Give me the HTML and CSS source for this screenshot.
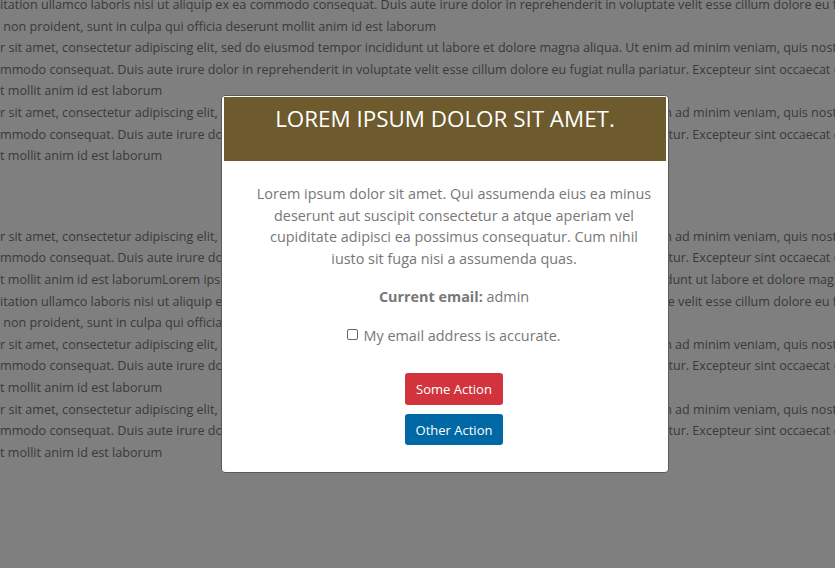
FILE: index.html
```html
<!DOCTYPE html>
<html lang="en">
<head>
<meta charset="utf-8">
<title>Modal</title>
<link rel="stylesheet" href="styles.css">
</head>
<body>
<div class="page">
  <div class="block block-top">
    <div class="line">itation ullamco laboris nisi ut aliquip ex ea commodo consequat. Duis aute irure dolor in reprehenderit in voluptate velit esse cillum dolore eu fugiat nulla pariatur.</div>
    <div class="line">&nbsp;non proident, sunt in culpa qui officia deserunt mollit anim id est laborum</div>
    <div class="line">r sit amet, consectetur adipiscing elit, sed do eiusmod tempor incididunt ut labore et dolore magna aliqua. Ut enim ad minim veniam, quis nostrud exercitation</div>
    <div class="line">mmodo consequat. Duis aute irure dolor in reprehenderit in voluptate velit esse cillum dolore eu fugiat nulla pariatur. Excepteur sint occaecat cupidatat non proident</div>
    <div class="line">t mollit anim id est laborum</div>
    <div class="line">r sit amet, consectetur adipiscing elit, sed do eiusmod tempor incididunt ut labore et dolore magna aliqua. Ut enim ad minim veniam, quis nostrud exercitation</div>
    <div class="line">mmodo consequat. Duis aute irure dolor in reprehenderit in voluptate velit esse cillum dolore eu fugiat nulla pariatur. Excepteur sint occaecat cupidatat non proident</div>
    <div class="line">t mollit anim id est laborum</div>
  </div>
  <div class="block block-bottom">
    <div class="line">r sit amet, consectetur adipiscing elit, sed do eiusmod tempor incididunt ut labore et dolore magna aliqua. Ut enim ad minim veniam, quis nostrud exercitation</div>
    <div class="line">mmodo consequat. Duis aute irure dolor in reprehenderit in voluptate velit esse cillum dolore eu fugiat nulla pariatur. Excepteur sint occaecat cupidatat non proident</div>
    <div class="line">t mollit anim id est laborumLorem ipsum dolor sit amet, consectetur adipiscing elit, sed do eiusmod tempor incididunt ut labore et dolore magna aliqua.</div>
    <div class="line">itation ullamco laboris nisi ut aliquip ex ea commodo consequat. Duis aute irure dolor in reprehenderit in voluptate velit esse cillum dolore eu fugiat nulla pariatur.</div>
    <div class="line">&nbsp;non proident, sunt in culpa qui officia deserunt mollit anim id est laborum</div>
    <div class="line">r sit amet, consectetur adipiscing elit, sed do eiusmod tempor incididunt ut labore et dolore magna aliqua. Ut enim ad minim veniam, quis nostrud exercitation</div>
    <div class="line">mmodo consequat. Duis aute irure dolor in reprehenderit in voluptate velit esse cillum dolore eu fugiat nulla pariatur. Excepteur sint occaecat cupidatat non proident</div>
    <div class="line">t mollit anim id est laborum</div>
    <div class="line">r sit amet, consectetur adipiscing elit, sed do eiusmod tempor incididunt ut labore et dolore magna aliqua. Ut enim ad minim veniam, quis nostrud exercitation</div>
    <div class="line">mmodo consequat. Duis aute irure dolor in reprehenderit in voluptate velit esse cillum dolore eu fugiat nulla pariatur. Excepteur sint occaecat cupidatat non proident</div>
    <div class="line">t mollit anim id est laborum</div>
  </div>
</div>

<div class="overlay"></div>

<div class="modal" role="dialog">
  <div class="modal-header">
    <h1 class="modal-title">LOREM IPSUM DOLOR SIT AMET.</h1>
  </div>
  <div class="modal-body">
    <p class="intro">Lorem ipsum dolor sit amet. Qui assumenda eius ea minus deserunt aut suscipit consectetur a atque aperiam vel cupiditate adipisci ea possimus consequatur. Cum nihil iusto sit fuga nisi a assumenda quas.</p>
    <p class="email"><strong>Current email:</strong> admin</p>
    <label class="check"><input type="checkbox" class="check-box"> My email address is accurate.</label>
    <div class="actions">
      <button class="btn btn-red">Some Action</button>
      <button class="btn btn-blue">Other Action</button>
    </div>
  </div>
</div>
</body>
</html>
```
FILE: styles.css
```css
html, body {
  margin: 0;
  padding: 0;
  height: 100%;
  overflow: hidden;
}

body {
  background: #ffffff;
  font-family: "Open Sans", "DejaVu Sans", sans-serif;
  color: #747474;
}

.page {
  font-size: 12.6px;
  line-height: 21.6px;
}

.block-top {
  margin-top: -6px;
}

.block-bottom {
  margin-top: 59px;
}

.line {
  white-space: nowrap;
  overflow: hidden;
}

.overlay {
  position: fixed;
  inset: 0;
  background: rgba(0, 0, 0, 0.5);
}

.modal {
  position: absolute;
  left: 221px;
  top: 95px;
  width: 448px;
  background: #ffffff;
  border: 1px solid #5a5a5a;
  border-radius: 4px;
  padding: 0 2px;
  box-sizing: border-box;
}

.modal-header {
  background: #6d5a2d;
  margin-top: 1px;
  height: 64px;
  display: flex;
  justify-content: center;
}

.modal-title {
  margin: 6px 0 0;
  font-size: 22.4px;
  font-weight: 400;
  line-height: 32px;
  color: #ffffff;
}

.modal-body {
  padding: 22px 11px 27px 29px;
  display: flex;
  flex-direction: column;
  align-items: center;
  text-align: center;
  font-size: 14.4px;
  line-height: 21.6px;
  color: #777777;
}

.intro {
  margin: 0;
}

.email {
  margin: 16.8px 0 0;
}

.email strong {
  font-weight: 700;
}

.check {
  margin-top: 17.4px;
  display: flex;
  align-items: center;
}

.check-box {
  appearance: none;
  -webkit-appearance: none;
  width: 11px;
  height: 11px;
  margin: 0 5px 2px 0;
  border: 1px solid #666666;
  border-radius: 2px;
  background: #ffffff;
  box-sizing: border-box;
}

.actions {
  margin-top: 26.4px;
  display: flex;
  flex-direction: column;
  align-items: center;
  gap: 9px;
}

.btn {
  width: 98px;
  height: 32px;
  border: none;
  border-radius: 3px;
  font-family: "Open Sans", "DejaVu Sans", sans-serif;
  font-size: 13px;
  color: #ffffff;
  padding: 0;
}

.btn-red {
  background: #d1343d;
}

.btn-blue {
  background: #0068a5;
  height: 31px;
}
```
